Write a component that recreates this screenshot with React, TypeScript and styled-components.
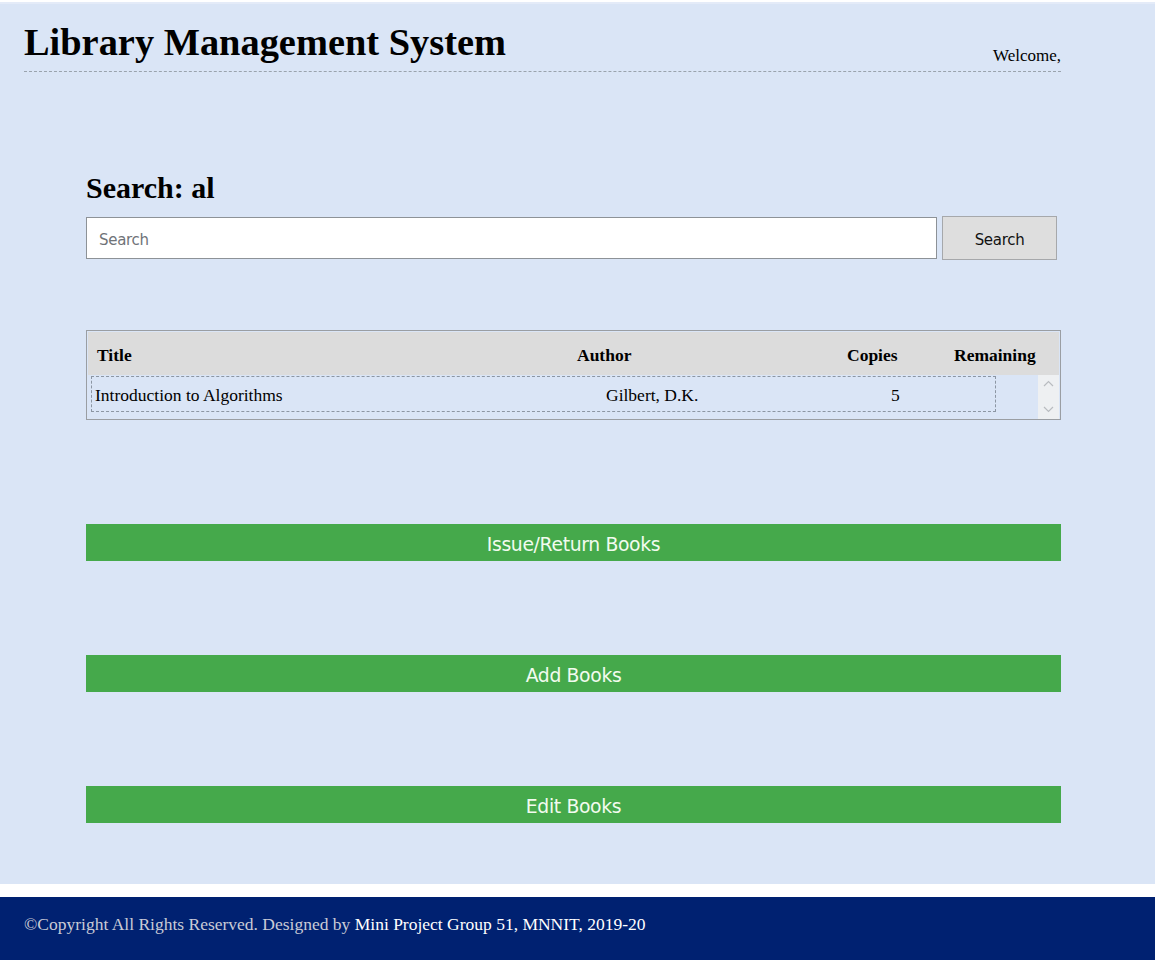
import styled, { createGlobalStyle } from 'styled-components'

const GlobalStyle = createGlobalStyle`
    body {
        margin: 0;
        background: #ffffff;
        font-family: "Liberation Serif", "Times New Roman", serif;
    }
`

const Page = styled.div`
    display: flex;
    flex-direction: column;
    width: 1155px;
    min-height: 960px;
    background: #ffffff;
`

const Panel = styled.div`
    margin-top: 2px;
    background: #dae5f6;
    border-top: 2px solid #e4ebf8;
    height: 882px;
    box-sizing: border-box;
    padding: 0 94px 0 24px;
`

const Header = styled.header`
    display: flex;
    justify-content: space-between;
    align-items: flex-end;
    border-bottom: 1px dashed #9aa3ad;
    padding: 18px 0 9px;
`

const Title = styled.h1`
    margin: 0;
    font-size: 38.4px;
    font-weight: 700;
    line-height: 40px;
    color: #000;
`

const Welcome = styled.span`
    font-size: 17px;
    line-height: 20px;
    margin-bottom: -4px;
    color: #000;
`

const Main = styled.main`
    display: flex;
    flex-direction: column;
    padding: 99px 0 0 62px;
`

const SearchTitle = styled.h2`
    margin: 0 0 11px;
    font-size: 30px;
    line-height: 34px;
    font-weight: 700;
`

const SearchRow = styled.form`
    display: flex;
    align-items: center;
    gap: 5px;
`

const SearchInput = styled.input`
    width: 851px;
    height: 42px;
    box-sizing: border-box;
    border: 1px solid #8d9297;
    background: #fff;
    padding: 3px 12px 0;
    font-family: "DejaVu Sans", sans-serif;
    font-size: 15px;
    letter-spacing: -0.3px;
    outline: none;

    &::placeholder {
        color: #6f7378;
    }
`

const SearchButton = styled.button`
    width: 115px;
    height: 44px;
    box-sizing: border-box;
    border: 1px solid #a6a8ab;
    background: #dedede;
    font-family: "DejaVu Sans", sans-serif;
    font-size: 15px;
    letter-spacing: -0.3px;
    color: #111;
    padding: 4px 0 0;
`

const Table = styled.div`
    margin-top: 70px;
    width: 975px;
    box-sizing: border-box;
    border: 1px solid #9a9ea3;
    padding: 1px 1px 0 1px;
`

const HeadRow = styled.div`
    display: grid;
    grid-template-columns: 480px 270px 107px 1fr;
    align-items: center;
    height: 43px;
    box-sizing: border-box;
    background: #dcdcdc;
    padding: 4px 0 0 9px;
    font-size: 17.5px;
    font-weight: 700;
`

const HeadCell = styled.div`
    text-align: left;
`

const Body = styled.div`
    display: flex;
    height: 44px;
`

const Rows = styled.div`
    flex: 1;
    padding: 1px 0 0 3px;
`

const Row = styled.div`
    display: grid;
    grid-template-columns: 511px 285px 1fr;
    align-items: center;
    width: 905px;
    height: 36px;
    box-sizing: border-box;
    border: 1px dashed #8c96a3;
    padding: 3px 0 0 3px;
    font-size: 17.5px;
`

const Scroll = styled.div`
    width: 21px;
    display: flex;
    flex-direction: column;
    justify-content: space-between;
    align-items: center;
    background: #eef0f2;
    padding: 5px 0 6px;
    box-sizing: border-box;
`

const ActionButton = styled.button<{ $top: number }>`
    display: block;
    width: 975px;
    height: 37px;
    margin-top: ${p => p.$top}px;
    border: none;
    background: #45a94b;
    color: #f2fbef;
    font-family: "DejaVu Sans", sans-serif;
    font-size: 18.8px;
    letter-spacing: -0.35px;
    padding: 3px 0 0;
`

const Footer = styled.footer`
    margin-top: 13px;
    height: 63px;
    box-sizing: border-box;
    background: #002171;
    display: flex;
    align-items: center;
    padding: 0 0 8px 24px;
    font-size: 17.5px;
    color: #c9cbd6;
`

const Strong = styled.span`
    color: #ffffff;
`

const Chevron = ({ up }: { up?: boolean }) => (
    <svg width="11" height="7" viewBox="0 0 11 7">
        <path
            d={up ? 'M1 6 L5.5 1.5 L10 6' : 'M1 1 L5.5 5.5 L10 1'}
            fill="none"
            stroke="#b9bcc0"
            strokeWidth="1.2"
        />
    </svg>
)

const App = () => {
    return (
        <>
            <GlobalStyle />
            <Page>
                <Panel>
                    <Header>
                        <Title>Library Management System</Title>
                        <Welcome>Welcome,</Welcome>
                    </Header>
                    <Main>
                        <SearchTitle>Search: al</SearchTitle>
                        <SearchRow onSubmit={e => e.preventDefault()}>
                            <SearchInput placeholder="Search" />
                            <SearchButton>Search</SearchButton>
                        </SearchRow>
                        <Table>
                            <HeadRow>
                                <HeadCell>Title</HeadCell>
                                <HeadCell>Author</HeadCell>
                                <HeadCell>Copies</HeadCell>
                                <HeadCell>Remaining</HeadCell>
                            </HeadRow>
                            <Body>
                                <Rows>
                                    <Row>
                                        <span>Introduction to Algorithms</span>
                                        <span>Gilbert, D.K.</span>
                                        <span>5</span>
                                    </Row>
                                </Rows>
                                <Scroll>
                                    <Chevron up />
                                    <Chevron />
                                </Scroll>
                            </Body>
                        </Table>
                        <ActionButton $top={104}>Issue/Return Books</ActionButton>
                        <ActionButton $top={94}>Add Books</ActionButton>
                        <ActionButton $top={94}>Edit Books</ActionButton>
                    </Main>
                </Panel>
                <Footer>
                    ©Copyright All Rights Reserved. Designed by&nbsp;<Strong>Mini Project Group 51, MNNIT, 2019-20</Strong>
                </Footer>
            </Page>
        </>
    )
}

export default App
